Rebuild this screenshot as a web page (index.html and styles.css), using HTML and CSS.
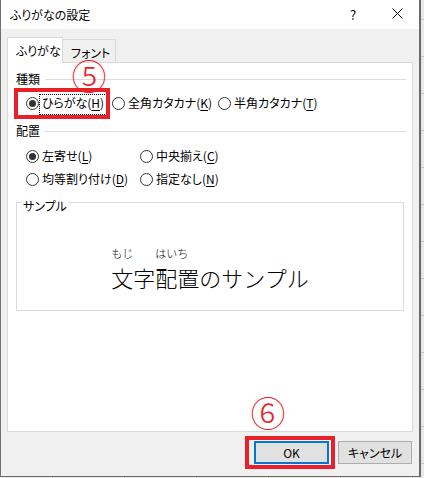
FILE: index.html
```html
<!DOCTYPE html>
<html lang="ja">
<head>
<meta charset="utf-8">
<title>ふりがなの設定</title>
<link rel="stylesheet" href="styles.css">
</head>
<body>
<div class="screen">
  <div class="dialog">
    <div class="titlebar">
      <span class="title">ふりがなの設定</span>
      <span class="help">?</span>
      <span class="close"><svg width="11" height="11" viewBox="0 0 11 11"><path d="M0.5 0.5 L10.5 10.5 M10.5 0.5 L0.5 10.5" stroke="#000" stroke-width="1" fill="none"/></svg></span>
    </div>
    <div class="body">
      <div class="tabs">
        <div class="tab active">ふりがな</div>
        <div class="tab">フォント</div>
      </div>
      <div class="panel">
        <div class="group-head"><span>種類</span><i class="rule"></i></div>
        <div class="radios type-row">
          <div class="radio checked focus"><span class="circle"></span><span class="lbl">ひらがな(<u>H</u>)</span></div>
          <div class="radio"><span class="circle"></span><span class="lbl">全角カタカナ(<u>K</u>)</span></div>
          <div class="radio"><span class="circle"></span><span class="lbl">半角カタカナ(<u>T</u>)</span></div>
        </div>
        <div class="group-head head-align"><span>配置</span><i class="rule"></i></div>
        <div class="radios align-grid">
          <div class="radio checked"><span class="circle"></span><span class="lbl">左寄せ(<u>L</u>)</span></div>
          <div class="radio"><span class="circle"></span><span class="lbl">中央揃え(<u>C</u>)</span></div>
          <div class="radio"><span class="circle"></span><span class="lbl">均等割り付け(<u>D</u>)</span></div>
          <div class="radio"><span class="circle"></span><span class="lbl">指定なし(<u>N</u>)</span></div>
        </div>
        <div class="sample">
          <span class="sample-label">サンプル</span>
          <div class="sample-text">
            <span class="ruby"><span class="rt">もじ</span><span class="rb">文字</span></span><span class="ruby"><span class="rt">はいち</span><span class="rb">配置</span></span><span class="rb">のサンプル</span>
          </div>
        </div>
      </div>
      <div class="footer">
        <button class="btn ok">OK</button>
        <button class="btn">キャンセル</button>
      </div>
    </div>
    <span class="badge badge5">⑤</span>
    <span class="redbox box5"></span>
    <span class="badge badge6">⑥</span>
    <span class="redbox box6"></span>
  </div>
</div>
</body>
</html>
```

FILE: styles.css
```css
* { box-sizing: border-box; margin: 0; padding: 0; }
html, body { width: 424px; height: 478px; overflow: hidden; }
body {
  font-family: "Noto Sans CJK JP", "Noto Sans", sans-serif;
  font-size: 12px;
  color: #000;
  background: #e6e6e6;
}
.screen {
  width: 424px;
  height: 478px;
  display: flex;
  align-items: flex-start;
  background-color: #e8e8e8;
  background-image:
    linear-gradient(to right, transparent 52px, #c8c8c8 52px, #c8c8c8 53px, transparent 53px),
    linear-gradient(to bottom, transparent 19px, #c8c8c8 19px, #c8c8c8 20px, transparent 20px);
  background-size: 72px 100%, 100% 37px;
}
.dialog {
  position: relative;
  width: 421px;
  height: 477px;
  border-left: 1px solid #707070;
  border-right: 2px solid #6a6a6a;
  border-bottom: 1px solid #6a6a6a;
  background: #f0f0f0;
  display: flex;
  flex-direction: column;
  font-feature-settings: "palt";
}
.titlebar {
  height: 29px;
  flex: none;
  background: #fff;
  display: flex;
  align-items: center;
  padding-left: 9px;
  padding-right: 16px;
}
.title { flex: 1; font-size: 12px; }
.help { width: 14px; text-align: center; font-size: 13px; margin-right: 32px; }
.close { width: 11px; height: 11px; display: flex; margin-top: -2px; }

.body { flex: 1; padding: 8px 6px 0 6px; }
.tabs { display: flex; align-items: flex-end; height: 25px; }
.tab {
  height: 23px;
  width: 53px;
  padding: 2px 0 0 8px;
  border: 1px solid #d9d9d9;
  border-left: none;
  border-bottom: none;
  background: #f0f0f0;
  display: flex;
  align-items: center;
}
.tab.active {
  width: 56px;
  height: 26px;
  padding-top: 0;
  border-left: 1px solid #d9d9d9;
  background: #fff;
  margin-bottom: -1px;
  position: relative;
  z-index: 1;
}

.panel {
  width: 406px;
  height: 370px;
  background: #fff;
  border: 1px solid #d9d9d9;
  padding: 7px 6px 0 8px;
}
.group-head { display: flex; align-items: center; height: 16px; }
.group-head .rule { flex: 1; height: 0; border-top: 1px solid #dcdcdc; margin-left: 5px; margin-top: 2px; }
.head-align { margin-top: 8px; }

.radios { display: grid; padding-left: 10px; }
.type-row { margin-top: 9px; grid-template-columns: 86px 106px auto; }
.align-grid { margin-top: 10px; grid-template-columns: 114px auto; row-gap: 4px; }
.radio { display: flex; align-items: flex-start; height: 19px; white-space: nowrap; }
.circle {
  width: 13px;
  height: 13px;
  margin-top: 2px;
  border: 1px solid #333;
  border-radius: 50%;
  background: #fff;
  display: flex;
  align-items: center;
  justify-content: center;
  flex: none;
}
.checked .circle::after {
  content: "";
  width: 7px;
  height: 7px;
  border-radius: 50%;
  background: #333;
}
.lbl { line-height: 16px; padding: 0 2px 3px; margin-left: 1px; }
.lbl u { text-underline-offset: 2px; }
.focus .lbl { outline: 1px dotted #000; }

.sample {
  position: relative;
  margin-top: 12px;
  width: 388px;
  height: 109px;
  border: 1px solid #dcdcdc;
  padding-top: 44px;
}
.sample-label {
  position: absolute;
  left: 5px;
  top: -4px;
  background: #fff;
  padding: 0 1px;
  line-height: 14px;
}
.sample-text {
  display: flex;
  justify-content: center;
  align-items: flex-end;
  font-feature-settings: normal;
}
.ruby { display: inline-flex; flex-direction: column; }
.rt { font-size: 11px; line-height: 12px; height: 12px; margin-bottom: 5px; font-weight: 300; }
.rb { font-size: 22px; line-height: 26px; font-weight: 300; }

.footer {
  display: flex;
  justify-content: flex-end;
  gap: 9px;
  margin-top: 9px;
  padding-right: 1px;
}
.btn {
  font-family: inherit;
  font-size: 12px;
  font-feature-settings: "palt";
  color: #000;
  width: 74px;
  height: 23px;
  background: #e1e1e1;
  border: 1px solid #adadad;
  display: flex;
  align-items: center;
  justify-content: center;
}
.btn.ok { width: 75px; border: 2px solid #0078d7; }

.badge {
  position: absolute;
  width: 28px;
  height: 26px;
  display: flex;
  align-items: center;
  justify-content: center;
  font-size: 35px;
  line-height: 26px;
  color: #e8242c;
  font-feature-settings: normal;
  font-weight: 300;
}
.badge5 { left: 74px; top: 62px; }
.badge6 { left: 253px; top: 399px; }
.redbox {
  position: absolute;
  border: 4px solid #e8202a;
}
.box5 { left: 13px; top: 88px; width: 96px; height: 31px; }
.box6 { left: 244px; top: 436px; width: 90px; height: 33px; }
```
